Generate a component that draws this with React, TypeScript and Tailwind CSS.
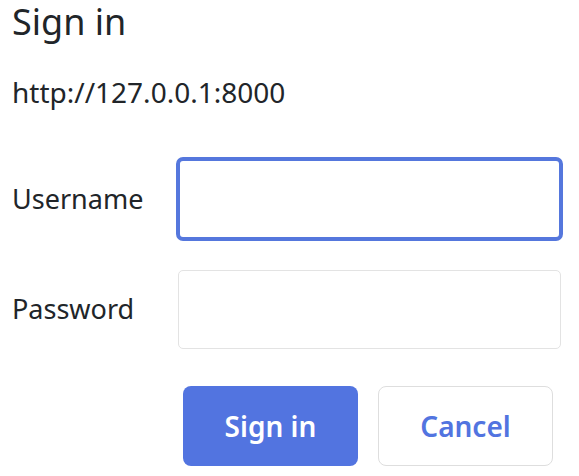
export default function App() {
  return (
    <div
      className="w-[579px] h-[476px] bg-white px-3 text-[#212529] overflow-hidden"
      style={{ fontFamily: '"Noto Sans", "Open Sans", sans-serif' }}
    >
      <h1 className="text-[36px] leading-[44px] font-normal">Sign in</h1>
      <p className="text-[28px] leading-[36px] mt-[30px]">http://127.0.0.1:8000</p>

      <form className="mt-[47px] flex flex-col">
        <div className="flex items-center">
          <label className="w-[164px] text-[27px]">Username</label>
          <div className="w-[387px] h-[84px] rounded-[7px] border-4 border-[#5577dd] bg-white" />
        </div>

        <div className="flex items-center mt-[29px]">
          <label className="w-[166px] text-[27px]">Password</label>
          <div className="w-[383px] h-[79px] rounded-[5px] border border-[#e3e3e3] bg-white" />
        </div>

        <div className="flex gap-[20px] mt-[37px] pl-[171px]">
          <button
            type="button"
            className="w-[175px] h-[80px] rounded-[8px] bg-[#5274e0] text-white text-[28px] font-semibold"
          >
            Sign in
          </button>
          <button
            type="button"
            className="w-[175px] h-[80px] rounded-[8px] border border-[#dedede] bg-white text-[#5274e0] text-[28px] font-semibold"
          >
            Cancel
          </button>
        </div>
      </form>
    </div>
  )
}
